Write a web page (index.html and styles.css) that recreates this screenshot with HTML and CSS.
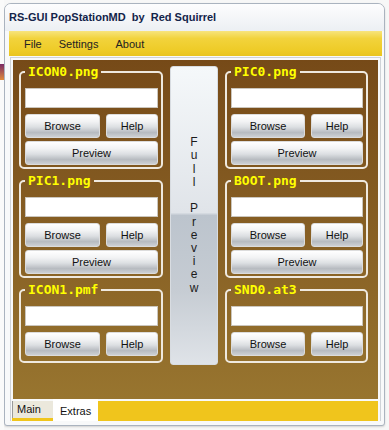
FILE: index.html
```html
<html>

<head>
    <title>RS-GUI PopStationMD</title>
    <link rel="stylesheet" href="styles.css">
</head>

<body>
    <div class="behind">
        <div class="behind-icon"></div>
    </div>
    <div class="window">
        <div class="titlebar">RS-GUI PopStationMD  by  Red Squirrel</div>
        <div class="client">
            <div class="menubar">
                <span>File</span>
                <span>Settings</span>
                <span>About</span>
            </div>
            <div class="tabctl">
                <div class="page">
                    <div class="col">
                        <fieldset class="group">
                            <legend>ICON0.png</legend>
                            <div class="field"></div>
                            <div class="btnrow">
                                <div class="btn">Browse</div>
                                <div class="btn">Help</div>
                            </div>
                            <div class="btn btn-wide">Preview</div>
                        </fieldset>
                        <fieldset class="group">
                            <legend>PIC1.png</legend>
                            <div class="field"></div>
                            <div class="btnrow">
                                <div class="btn">Browse</div>
                                <div class="btn">Help</div>
                            </div>
                            <div class="btn btn-wide">Preview</div>
                        </fieldset>
                        <fieldset class="group group-last">
                            <legend>ICON1.pmf</legend>
                            <div class="field"></div>
                            <div class="btnrow">
                                <div class="btn">Browse</div>
                                <div class="btn">Help</div>
                            </div>
                        </fieldset>
                    </div>

                    <div class="full-preview">F<br>u<br>l<br>l<br><br>P<br>r<br>e<br>v<br>i<br>e<br>w</div>

                    <div class="col">
                        <fieldset class="group">
                            <legend>PIC0.png</legend>
                            <div class="field"></div>
                            <div class="btnrow">
                                <div class="btn">Browse</div>
                                <div class="btn">Help</div>
                            </div>
                            <div class="btn btn-wide">Preview</div>
                        </fieldset>
                        <fieldset class="group">
                            <legend>BOOT.png</legend>
                            <div class="field"></div>
                            <div class="btnrow">
                                <div class="btn">Browse</div>
                                <div class="btn">Help</div>
                            </div>
                            <div class="btn btn-wide">Preview</div>
                        </fieldset>
                        <fieldset class="group group-last">
                            <legend>SND0.at3</legend>
                            <div class="field"></div>
                            <div class="btnrow">
                                <div class="btn">Browse</div>
                                <div class="btn">Help</div>
                            </div>
                        </fieldset>
                    </div>
                </div>
                <div class="tabs">
                    <span class="tab tab-main">Main</span>
                    <span class="tab tab-extras">Extras</span>
                </div>
            </div>
        </div>
    </div>
</body>

</html>
```

FILE: styles.css
```css
* {
    box-sizing: border-box;
}

body {
    margin: 0;
    width: 389px;
    height: 430px;
    overflow: hidden;
    position: relative;
    background: #f7f7f7;
    font-family: "Liberation Sans", Arial, sans-serif;
    color: #111;
}

/* bit of another window showing on the left */
.behind {
    position: absolute;
    left: 0;
    top: 0;
    width: 4px;
    height: 430px;
    background: #fafafa;
}

.behind-icon {
    margin-top: 64px;
    height: 16px;
    background: linear-gradient(#7a2a66, #e08a3a);
}

.window {
    margin: 3px 0 0 4px;
    width: 381px;
    height: 423px;
    border: 1px solid #aab3bf;
    border-radius: 7px 7px 3px 3px;
    background: #f8f9fa;
    box-shadow: 0 1px 2px rgba(0, 0, 0, 0.15);
}

.titlebar {
    height: 27px;
    padding-left: 4px;
    font-size: 11px;
    font-weight: bold;
    line-height: 27px;
    color: #13244a;
    white-space: pre;
    border-radius: 6px 6px 0 0;
    background: linear-gradient(#fdfdfe, #eceff3);
}

.client {
    padding: 0 2px 0 4px;
}

.menubar {
    height: 25px;
    display: flex;
    align-items: center;
    gap: 17px;
    padding-left: 15px;
    font-size: 11px;
    color: #222;
    background: linear-gradient(#f7e47c, #f2d33c 30%, #eecb26 80%, #e9c420);
}

.tabctl {
    margin: 1px 1px 0;
    padding: 2px 2px 0;
    border: 1px solid #cfd3d8;
    border-bottom: none;
}

.page {
    height: 339px;
    padding: 5px 0 0 6px;
    display: grid;
    grid-template-columns: 144px 48px 143px;
    column-gap: 7px;
    align-items: start;
    background: linear-gradient(#764a18, #8a6326 60%, #98752f);
}

.group {
    margin: 0 0 5px;
    padding: 9px 3px 2px 4px;
    min-width: 0;
    border: 2px solid #efe9df;
    border-radius: 5px;
}

.group-last {
    padding-bottom: 5px;
}

.group legend {
    padding: 0 3px;
    font-family: "DejaVu Sans Mono", monospace;
    font-size: 13px;
    font-weight: bold;
    line-height: 14px;
    color: #ffff00;
}

.field {
    height: 20px;
    background: #ffffff;
    border: 1px solid #cbc6bd;
}

.btnrow {
    display: grid;
    grid-template-columns: 1fr 52px;
    column-gap: 6px;
    margin-top: 6px;
}

.btn {
    height: 24px;
    display: flex;
    align-items: center;
    justify-content: center;
    font-size: 11px;
    color: #111;
    border: 1px solid #dcdcdc;
    border-radius: 3px;
    background: linear-gradient(#ffffff, #f2f3f4 30%, #dcdfe2 55%, #b7bbc0 80%, #cdd0d4);
}

.btn-wide {
    margin-top: 3px;
}

.full-preview {
    margin-top: 1px;
    height: 299px;
    display: flex;
    align-items: center;
    justify-content: center;
    text-align: center;
    font-size: 12px;
    line-height: 13.2px;
    color: #1b1b1b;
    border: 1px solid #d8dce1;
    border-radius: 3px;
    background: linear-gradient(#f5f8fa, #e0e4e9 49%, #bcc4cd 50%, #c6ccd3 75%, #dfe3e8);
}

.tabs {
    height: 22px;
    margin-left: -1px;
    display: flex;
    align-items: flex-start;
    font-size: 11px;
    background: linear-gradient(transparent 2px, #f0c51c 2px);
}

.tab-main {
    margin-top: 2px;
    width: 41px;
    height: 17px;
    padding-left: 4px;
    line-height: 17px;
    background: #ebe8dc;
    border-left: 1px solid #9a9a9a;
}

.tab-extras {
    width: 45px;
    height: 22px;
    padding-left: 7px;
    line-height: 24px;
    background: #ffffff;
}
```
